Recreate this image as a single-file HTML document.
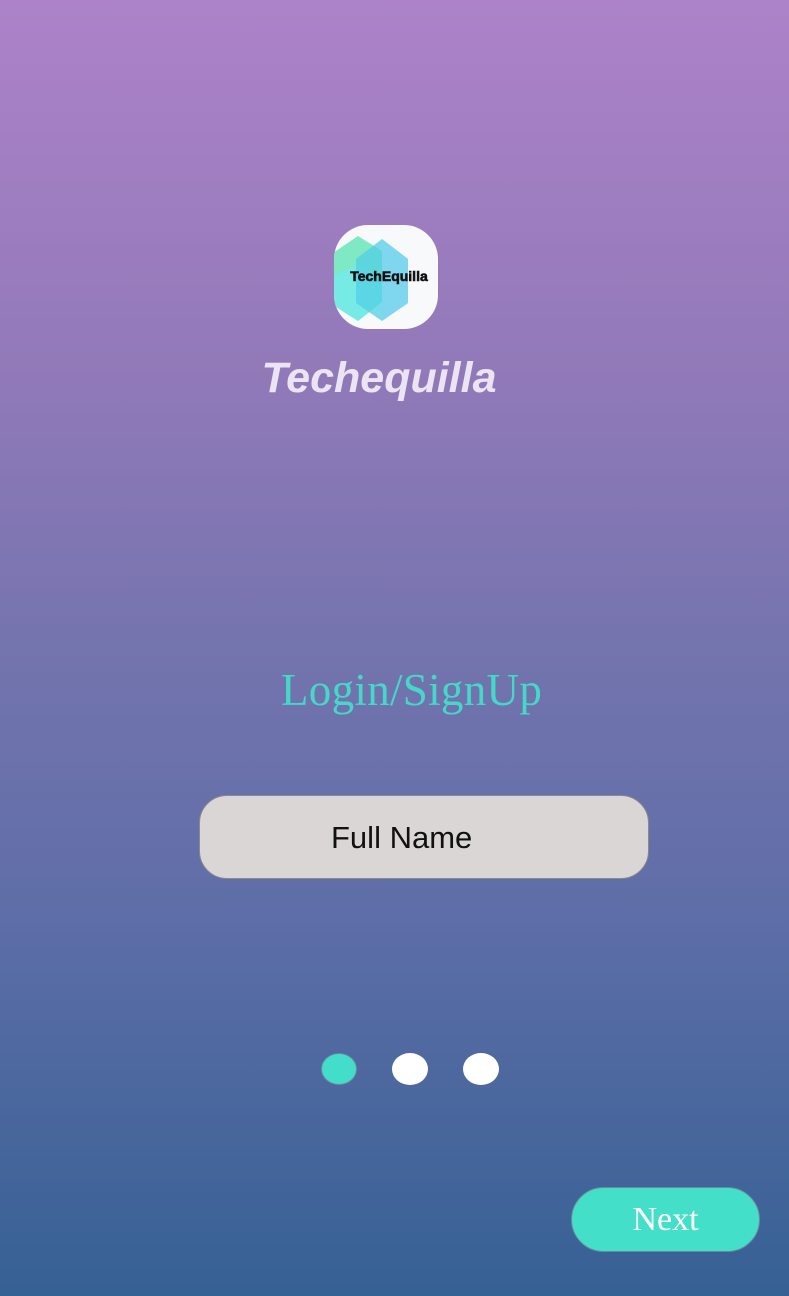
<!DOCTYPE html>
<html><head><meta charset="utf-8"><style>
html,body{margin:0;padding:0}
body{width:789px;height:1296px;position:relative;overflow:hidden;
background:linear-gradient(to bottom,#ad82c8 0%,#9079b8 30%,#7474ae 50%,#5f6ea8 70%,#4a679e 85%,#366194 100%);
font-family:"Liberation Sans",sans-serif}
.logo{position:absolute;left:334px;top:225px;width:104px;height:104px;border-radius:34px;background:#f7f9fb;overflow:hidden}
.title{position:absolute;left:0;width:758px;top:354px;text-align:center;font-size:43px;font-style:italic;font-weight:bold;color:#ece4f3}
.login{position:absolute;left:281px;top:664px;font-family:"Liberation Serif",serif;font-size:45px;color:#45d8c8;letter-spacing:0.3px}
.input{position:absolute;left:199px;top:795px;width:450px;height:84px;border-radius:28px;background:#dad6d6;border:1px solid #8a8a8a;box-sizing:border-box;font-size:31px;color:#111;line-height:84px;padding-left:131px}
.dot{position:absolute;top:1053px;width:36px;height:32px;border-radius:50%;background:#fff}
.next{position:absolute;left:571px;top:1187px;width:189px;height:65px;border-radius:33px;background:#44dfc8;border:1px solid #6a8a9a;box-sizing:border-box;color:#fff;font-family:"Liberation Serif",serif;font-size:34px;text-align:center;line-height:63px}
</style></head><body>
<div class="logo"><svg width="104" height="104" viewBox="0 0 104 104">
<polygon points="-4,30 24,11 48,26 48,77 24,96 -4,78" fill="#7fe8c4"/>
<polygon points="-4,52 24,40 48,55 48,77 24,96 -4,78" fill="#74eaea" opacity=".85"/>
<polygon points="48,14 74,34 74,78 48,96 22,78 22,34" fill="#52cfe4" opacity=".75"/>
<polygon points="48,14 74,34 74,78 48,96" fill="#80d6ef" opacity=".7"/>
<text x="55" y="56" text-anchor="middle" font-family="Liberation Sans,sans-serif" font-weight="bold" font-size="14" fill="#111" stroke="#111" stroke-width=".6">TechEquilla</text>
</svg></div>
<div class="title">Techequilla</div>
<div class="login">Login/SignUp</div>
<div class="input">Full Name</div>
<div class="dot" style="left:321px;background:#43dec9;border:1px solid #6a8aa0;box-sizing:border-box"></div>
<div class="dot" style="left:392px"></div>
<div class="dot" style="left:463px"></div>
<div class="next">Next</div>
</body></html>
